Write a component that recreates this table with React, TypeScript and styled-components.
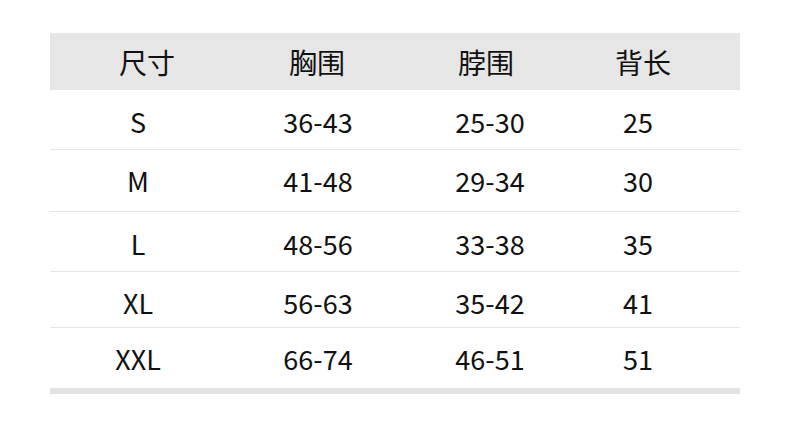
import styled, { createGlobalStyle } from 'styled-components';

const GlobalStyle = createGlobalStyle`
  html, body {
    margin: 0;
    padding: 0;
    background: #ffffff;
  }
  body {
    font-family: "Noto Sans CJK SC", "Noto Sans", sans-serif;
    color: #111111;
  }
`;

const Page = styled.div`
  width: 790px;
  height: 426px;
  padding: 33px 50px 0;
  box-sizing: border-box;
`;

const Table = styled.div`
  width: 690px;
  display: flex;
  flex-direction: column;
  border-bottom: 6px solid #e3e3e3;
`;

const Row = styled.div<{ $h: number; $cols: string; $head?: boolean; $last?: boolean; $shift?: number }>`
  display: grid;
  grid-template-columns: ${(p) => p.$cols};
  align-items: center;
  height: ${(p) => p.$h}px;
  box-sizing: border-box;
  padding-top: ${(p) => p.$shift ?? 0}px;
  background: ${(p) => (p.$head ? '#e6e6e6' : 'transparent')};
  border-bottom: ${(p) => (p.$head || p.$last ? 'none' : '1px solid #e6e6e6')};
  font-size: ${(p) => (p.$head ? 28 : 27)}px;
  line-height: 1;
`;

const Cell = styled.div`
  text-align: center;
  white-space: nowrap;
`;

const headCols = '194px 146px 192px 122px';
const bodyCols = '176px 184px 160px 136px';

const head = ['尺寸', '胸围', '脖围', '背长'];

const rows = [
  { h: 60, shift: 4, cells: ['S', '36-43', '25-30', '25'] },
  { h: 62, shift: 0, cells: ['M', '41-48', '29-34', '30'] },
  { h: 60, shift: 4, cells: ['L', '48-56', '33-38', '35'] },
  { h: 56, shift: 5, cells: ['XL', '56-63', '35-42', '41'] },
  { h: 60, shift: 0, cells: ['XXL', '66-74', '46-51', '51'] },
];

export default function App() {
  return (
    <>
      <GlobalStyle />
      <Page>
        <Table>
          <Row $h={57} $cols={headCols} $head>
            {head.map((t) => (
              <Cell key={t}>{t}</Cell>
            ))}
          </Row>
          {rows.map((r, i) => (
            <Row key={i} $h={r.h} $cols={bodyCols} $shift={r.shift} $last={i === rows.length - 1}>
              {r.cells.map((c, j) => (
                <Cell key={j}>{c}</Cell>
              ))}
            </Row>
          ))}
        </Table>
      </Page>
    </>
  );
}
